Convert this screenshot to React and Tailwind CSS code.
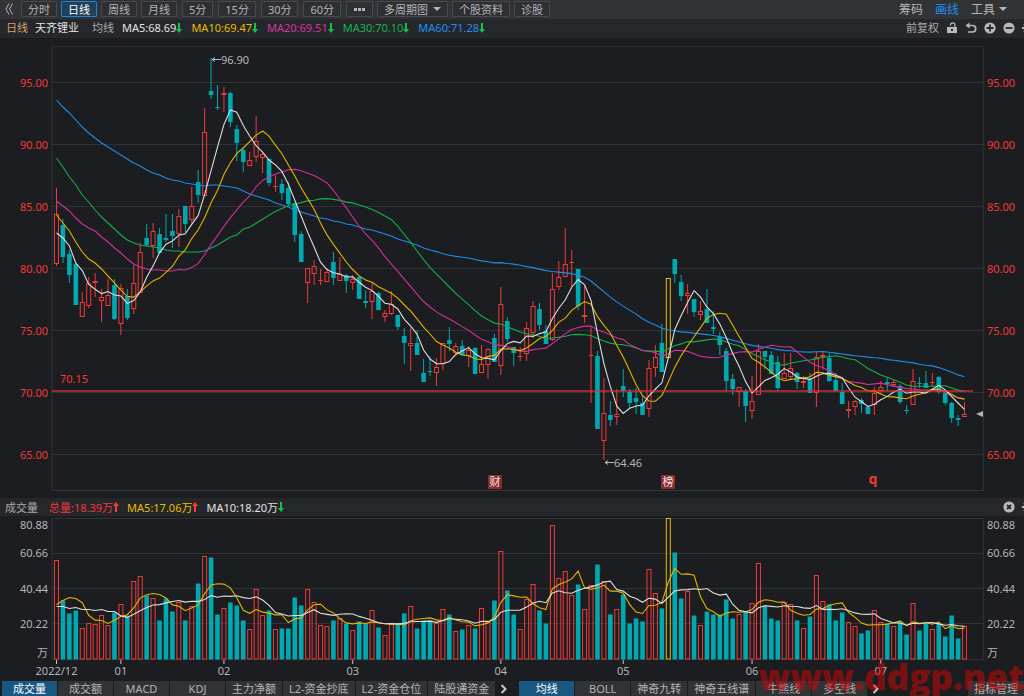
import { useState } from 'react'

// [high, body top, body bottom, low, kind] in chart units, r = up, t = down, y = marked day
const CANDLES = [
  [188,214,264,266,'r'],[219,225,257,263,'t'],[250,254,275,283,'t'],[263,264,305,305,'t'],
  [292,302,317,317,'r'],[277,283,306,308,'r'],[273,281,283,297,'r'],[289,297,301,322,'r'],
  [279,295,306,306,'r'],[279,285,319,320,'t'],[284,288,324,335,'r'],[289,296,318,320,'t'],
  [265,283,309,314,'r'],[243,252,293,293,'r'],[224,238,245,247,'t'],[223,231,246,258,'r'],
  [228,234,253,253,'t'],[214,238,240,242,'t'],[214,231,236,248,'t'],[209,216,234,247,'r'],
  [206,206,224,232,'t'],[187,206,220,223,'r'],[170,182,195,203,'t'],[108,132,196,196,'r'],
  [58,91,95,99,'t'],[85,107,108,110,'t'],[87,93,95,112,'r'],[92,93,122,127,'t'],
  [125,129,143,161,'t'],[147,150,162,172,'t'],[152,160,166,166,'r'],[116,141,157,162,'r'],
  [152,154,158,173,'r'],[158,159,183,186,'t'],[175,186,187,192,'r'],[179,184,193,200,'t'],
  [182,188,204,205,'t'],[203,203,235,242,'t'],[231,234,262,262,'t'],[268,268,283,303,'r'],
  [260,266,274,285,'r'],[269,280,281,285,'r'],[268,272,282,282,'r'],[252,262,278,285,'t'],
  [257,274,281,281,'r'],[274,275,281,293,'t'],[275,279,283,290,'r'],[276,277,299,299,'t'],
  [290,301,303,308,'t'],[283,291,302,319,'r'],[292,293,310,310,'t'],[310,313,317,322,'r'],
  [291,304,314,315,'r'],[315,315,327,330,'t'],[328,336,343,364,'t'],[327,343,346,371,'r'],
  [330,343,355,355,'t'],[359,373,382,382,'t'],[356,371,372,376,'t'],[358,367,373,386,'r'],
  [343,343,364,370,'r'],[327,340,344,351,'t'],[343,346,353,355,'r'],[340,346,355,356,'t'],
  [346,350,356,367,'r'],[347,348,374,374,'t'],[345,364,373,373,'r'],[348,349,365,379,'r'],
  [334,338,362,362,'t'],[287,304,366,375,'r'],[317,321,339,342,'t'],[347,347,353,366,'t'],
  [347,356,357,361,'r'],[322,328,354,361,'r'],[301,306,333,338,'r'],[303,309,325,330,'t'],
  [325,331,344,344,'t'],[273,289,340,341,'r'],[261,277,287,290,'r'],[228,264,277,277,'r'],
  [250,262,263,286,'r'],[269,269,306,310,'t'],[286,315,317,323,'r'],[326,355,356,403,'r'],
  [351,356,429,429,'t'],[378,413,441,460,'r'],[401,415,420,426,'t'],[389,414,417,425,'r'],
  [369,386,391,397,'t'],[389,392,403,408,'t'],[388,398,402,414,'t'],[395,403,415,415,'t'],
  [360,368,409,417,'r'],[345,357,368,377,'r'],[324,343,372,372,'t'],[278,278,358,358,'y'],
  [259,259,274,283,'t'],[275,282,296,301,'t'],[284,293,296,314,'r'],[299,299,312,317,'t'],
  [301,311,315,320,'r'],[289,309,323,323,'t'],[311,327,329,334,'t'],[332,337,345,355,'t'],
  [348,351,381,391,'t'],[374,379,389,395,'t'],[387,387,392,407,'r'],[389,391,406,422,'t'],
  [376,401,411,419,'r'],[344,351,395,395,'r'],[351,351,357,369,'t'],[351,355,374,374,'t'],
  [356,362,388,391,'t'],[353,373,379,379,'r'],[353,368,377,379,'r'],[372,373,382,389,'t'],
  [376,381,383,388,'r'],[373,379,393,393,'t'],[352,357,393,407,'r'],[351,355,357,370,'r'],
  [353,358,381,382,'t'],[373,380,391,391,'t'],[383,392,404,404,'t'],[401,409,411,418,'r'],
  [400,401,407,415,'r'],[398,400,404,413,'t'],[405,407,414,414,'t'],[387,393,405,415,'r'],
  [381,387,391,393,'r'],[377,382,384,391,'t'],[380,382,385,387,'r'],[384,386,402,404,'t'],
  [405,410,411,414,'t'],[369,381,405,405,'r'],[377,383,384,388,'t'],[371,383,388,388,'t'],
  [373,382,383,386,'r'],[376,377,392,394,'t'],[393,393,403,405,'t'],[402,403,418,423,'t'],
  [415,418,420,426,'t'],[402,414,417,417,'r'],
]

const VOLUMES = [
  99,59,46,49,31,36,35,44,34,47,55,44,78,83,64,61,39,61,48,57,39,53,76,103,102,45,51,57,54,39,
  30,70,44,49,30,31,31,62,54,70,57,34,33,39,41,36,29,38,36,49,32,24,35,36,46,53,31,39,39,36,
  50,45,28,30,34,31,51,37,59,108,69,45,30,60,75,49,36,134,81,88,64,75,50,74,95,78,45,50,65,36,
  41,38,90,66,51,141,107,61,68,44,34,48,45,45,60,41,45,48,56,96,54,41,39,57,55,39,31,43,84,58,
  55,39,47,37,33,26,29,49,37,36,33,38,25,56,29,36,30,36,23,44,21,33,
]

// The averages need history from before the first visible day
const SEED5 = [233,238,246,263]
const SEED10 = [215,223,231,242,252,259,263,269,276]
const SEED20 = [201,206,211,218,224,228,231,237,242,248,253,259,264,267,269,270,270,271,271]
const SEED30 = [158,167,177,185,195,202,210,217,223,229,235,240,243,245,246,247,248,250,251,251,252,252,252,251,248,245,241,237,235]
const SEED60 = [
  100,107,113,120,127,133,138,143,147,151,155,159,163,166,170,173,175,178,180,181,183,184,185,186,185,185,186,187,188,191,
  194,196,198,200,203,205,207,210,212,214,216,218,219,221,222,224,225,227,229,230,232,234,236,239,241,243,245,248,250,
]
const VOL_SEED5 = [55,59,62,61]
const VOL_SEED10 = [53,53,51,52,50,50,49,50,48]

const CLOSES = CANDLES.map(([, top, bottom, , kind]) => (kind === 't' ? bottom : top))
const COLORS = { r: '#f03a3a', t: '#00a8b0', y: '#e6bd00' }
const BASE = 659.5

const cx = (i) => 56.5 + i * 6.44

function average(values, n, seed) {
  return values.map((_, i) => {
    if (i < n - 1) return seed[i]
    let sum = 0
    for (let k = i - n + 1; k <= i; k++) sum += values[k]
    return sum / n
  })
}

const toPoints = (ys) => ys.map((y, i) => `${cx(i).toFixed(1)},${y.toFixed(1)}`).join(' ')

const PRICE_LINES = [
  { color: '#1e8ce6', points: toPoints(average(CLOSES, 60, SEED60)) },
  { color: '#14ae4c', points: toPoints(average(CLOSES, 30, SEED30)) },
  { color: '#d0309c', points: toPoints(average(CLOSES, 20, SEED20)) },
  { color: '#e0b400', points: toPoints(average(CLOSES, 10, SEED10)) },
  { color: '#dedede', points: toPoints(average(CLOSES, 5, SEED5)) },
]

const VOLUME_LINES = [
  { color: '#e0b400', points: toPoints(average(VOLUMES, 5, VOL_SEED5).map((v) => BASE - v)) },
  { color: '#dedede', points: toPoints(average(VOLUMES, 10, VOL_SEED10).map((v) => BASE - v)) },
]

const PRICE_TICKS = [
  [82.5, '95.00'], [144.5, '90.00'], [206.5, '85.00'], [268.5, '80.00'],
  [330.5, '75.00'], [392.5, '70.00'], [454.5, '65.00'],
]
const VOLUME_TICKS = [[525, '80.88'], [553, '60.66'], [589, '40.44'], [624, '20.22'], [653, '万']]
const MONTHS = [[0, '2022/12'], [10, '01'], [26, '02'], [46, '03'], [69, '04'], [88, '05'], [108, '06'], [128, '07']]

const DAY_PERIODS = ['分时', '日线', '周线', '月线']
const MINUTE_PERIODS = ['5分', '15分', '30分', '60分']
const LEGEND = [
  ['MA5:68.69', 'text-[#e2e2e2]'],
  ['MA10:69.47', 'text-[#e6bd00]'],
  ['MA20:69.51', 'text-[#d9329f]'],
  ['MA30:70.10', 'text-[#16b24e]'],
  ['MA60:71.28', 'text-[#1e90f0]'],
]
const SUB_TABS = ['成交量', '成交额', 'MACD', 'KDJ', '主力净额', 'L2-资金抄底', 'L2-资金仓位', '陆股通资金']
const MAIN_TABS = ['均线', 'BOLL', '神奇九转', '神奇五线谱', '牛熊线', '多空线']

function Arrow({ up }) {
  return (
    <svg viewBox="0 0 6 12" className={`h-3 w-[6px] shrink-0 ${up ? 'text-[#ff3c3c]' : 'rotate-180 text-[#12c24e]'}`} aria-hidden="true">
      <path d="M3 1 L6 5 H4 V11 H2 V5 H0 Z" fill="currentColor" />
    </svg>
  )
}

function Legend({ text, color, up }) {
  return (
    <span className={`flex items-center ${color}`}>
      {text}
      <Arrow up={up} />
    </span>
  )
}

function Caret() {
  return (
    <svg viewBox="0 0 8 4" className="h-1 w-2" aria-hidden="true">
      <path d="M0 0 H8 L4 4 Z" fill="currentColor" />
    </svg>
  )
}

function GearEdge() {
  return (
    <svg viewBox="0 0 12 12" className="h-3 w-3 shrink-0" aria-hidden="true">
      <circle cx="6" cy="6" r="3" fill="none" stroke="currentColor" strokeWidth="2" />
      <path d="M6 0 V3 M6 9 V12 M0 6 H3 M9 6 H12 M2 2 L4 4 M8 8 L10 10 M2 10 L4 8 M8 4 L10 2" stroke="currentColor" strokeWidth="2" />
    </svg>
  )
}

function ToolButton({ active, children, ...rest }) {
  return (
    <button
      type="button"
      className={`flex h-4 items-center gap-[5px] rounded-[1px] border px-[6px] whitespace-nowrap ${
        active ? 'border-[#1b86d8] bg-[#1f3f5a] text-white' : 'border-[#48494d] bg-[#2e2f33] text-[#b4b5b8]'
      }`}
      {...rest}
    >
      {children}
    </button>
  )
}

function Toolbar() {
  const [period, setPeriod] = useState('日线')
  const periodButton = (p) => (
    <ToolButton key={p} active={p === period} onClick={() => setPeriod(p)}>{p}</ToolButton>
  )
  return (
    <header className="flex h-[19px] items-center justify-between bg-[#323337] pr-[17px] pb-px text-[#b4b5b8]">
      <div className="flex items-center gap-[5px]">
        <div className="flex items-center gap-1">
          <button type="button" aria-label="收起" className="flex w-[17px] justify-center">
            <svg viewBox="0 0 8 12" className="h-3 w-2">
              <path d="M4 0.5 L1 6 L4 11.5 M7.5 0.5 L4.5 6 L7.5 11.5" fill="none" stroke="currentColor" />
            </svg>
          </button>
          {DAY_PERIODS.map(periodButton)}
        </div>
        {MINUTE_PERIODS.map(periodButton)}
        <div className="flex items-center gap-1">
          <ToolButton aria-label="更多">
            <svg viewBox="0 0 13 3" className="h-[3px] w-[13px]">
              <path d="M1 0 H4 V3 H1 Z M5 0 H8 V3 H5 Z M9 0 H12 V3 H9 Z" fill="currentColor" />
            </svg>
          </ToolButton>
          <ToolButton>多周期图<Caret /></ToolButton>
          <ToolButton>个股资料</ToolButton>
          <ToolButton>诊股</ToolButton>
        </div>
      </div>
      <div className="flex items-center gap-3 text-[12px]">
        <button type="button">筹码</button>
        <button type="button" className="text-[#1e90f0]">画线</button>
        <button type="button" className="flex items-center gap-1">工具<Caret /></button>
      </div>
    </header>
  )
}

function PriceHeader() {
  return (
    <div className="flex h-[19px] items-center justify-between overflow-hidden bg-[#26272b] pb-[2px] pl-[6px] text-[#a9aaad]">
      <div className="flex items-center whitespace-nowrap">
        <span className="text-[#d9a066]">日线</span>
        <span className="ml-[7px] text-[#e2e2e2]">天齐锂业</span>
        <span className="mr-2 ml-[13px]">均线</span>
        <div className="flex gap-[9px]">
          {LEGEND.map(([text, color]) => <Legend key={text} text={text} color={color} />)}
        </div>
      </div>
      <div className="-mr-[10px] flex items-center gap-[7px] text-[#b8b9bc]">
        <button type="button" className="text-[#a9aaad]">前复权</button>
        <button type="button" aria-label="锁定">
          <svg viewBox="0 0 12 12" className="h-3 w-3">
            <path d="M4.5 3.6 V3 A2.2 2.2 0 0 1 8.9 3 V5" fill="none" stroke="currentColor" strokeWidth="1.2" />
            <path d="M1 5 H11 V11 H1 Z M5 7 V9 H7 V7 Z" fill="currentColor" fillRule="evenodd" />
          </svg>
        </button>
        <button type="button" aria-label="撤销">
          <svg viewBox="0 0 12 12" className="h-3 w-3">
            <path d="M2 3.5 H7.5 A3.2 3.2 0 0 1 7.5 10 H3" fill="none" stroke="currentColor" strokeWidth="1.6" />
            <path d="M0.5 3.5 L4.5 0.5 V6.5 Z" fill="currentColor" />
          </svg>
        </button>
        <button type="button" aria-label="放大">
          <svg viewBox="0 0 12 12" className="h-3 w-3">
            <circle cx="6" cy="6" r="5.6" fill="currentColor" />
            <path d="M2.5 6 H9.5 M6 2.5 V9.5" stroke="#26272b" strokeWidth="1.8" />
          </svg>
        </button>
        <button type="button" aria-label="缩小">
          <svg viewBox="0 0 12 12" className="h-3 w-3">
            <circle cx="6" cy="6" r="5.6" fill="currentColor" />
            <path d="M2.5 6 H9.5" stroke="#26272b" strokeWidth="1.8" />
          </svg>
        </button>
        <button type="button" aria-label="设置"><GearEdge /></button>
      </div>
    </div>
  )
}

function Candle({ x, candle }) {
  const [high, top, bottom, low, kind] = candle
  const color = COLORS[kind]
  const flat = bottom - top < 2
  if (kind === 't' || flat) {
    return (
      <g>
        <path d={`M${x} ${high} V${low}`} stroke={color} />
        <rect x={x - 2.3} y={top} width="4.6" height={Math.max(bottom - top, 1)} fill={color} />
      </g>
    )
  }
  return (
    <g fill="none" stroke={color}>
      <path d={`M${x} ${high} V${top} M${x} ${bottom} V${low}`} />
      <rect x={x - 2} y={top + 0.5} width="4" height={bottom - top - 1} />
    </g>
  )
}

function Flag({ x, label }) {
  return (
    <g>
      <rect x={x} y="475" width="14" height="14" rx="1" fill="#8c2c2f" />
      <text x={x + 7} y="486" textAnchor="middle" fill="#f0e4e4">{label}</text>
    </g>
  )
}

function PriceChart() {
  return (
    <svg viewBox="0 38 1024 460" className="block w-full text-[11px]" role="img" aria-label="天齐锂业 日线">
      <path d="M52 46.5 H984" stroke="#2c2d31" />
      <path d="M52 46 V490 M983.5 46 V490" stroke="#2c2d31" strokeWidth="1.4" />
      <path d="M52 490.5 H984" stroke="#343539" />
      {PRICE_TICKS.map(([y, label]) => (
        <g key={label} fill="#f03a3a">
          <path d={`M52 ${y} H983`} stroke="#303135" />
          <text x="48" y={y + 4.5} textAnchor="end">{label}</text>
          <text x="987" y={y + 4.5}>{label}</text>
        </g>
      ))}
      {CANDLES.map((c, i) => <Candle key={i} x={cx(i)} candle={c} />)}
      {PRICE_LINES.map((l) => (
        <polyline key={l.color} points={l.points} fill="none" stroke={l.color} strokeWidth="1.1" />
      ))}
      <path d="M52 391 H973" stroke="#d83338" strokeOpacity="0.65" strokeWidth="2" />
      <text x="60" y="383" fill="#f03a3a">70.15</text>
      <g fill="#b4b5b8">
        <path d="M212 59.5 H221 M215 57.5 L212 59.5 L215 61.5" fill="none" stroke="#b4b5b8" />
        <text x="221" y="64">96.90</text>
        <path d="M605 462.5 H614 M608 460.5 L605 462.5 L608 464.5" fill="none" stroke="#b4b5b8" />
        <text x="614" y="467">64.46</text>
        <path d="M976 414 L983 411 V417 Z" />
      </g>
      <Flag x={488} label="财" />
      <Flag x={661} label="榜" />
      <text x="873" y="484" textAnchor="middle" fill="#f03a3a" className="text-[14px] font-bold">q</text>
    </svg>
  )
}

function VolumeHeader() {
  return (
    <div className="flex h-[18px] items-center justify-between overflow-hidden bg-[#26272b] pl-[5px] text-[#a9aaad]">
      <div className="flex items-center gap-2 whitespace-nowrap">
        <span className="mr-[3px]">成交量</span>
        <Legend text="总量:18.39万" color="text-[#f03a3a]" up />
        <Legend text="MA5:17.06万" color="text-[#e6bd00]" up />
        <Legend text="MA10:18.20万" color="text-[#e2e2e2]" />
      </div>
      <div className="-mr-[10px] flex items-center gap-[7px] text-[#b8b9bc]">
        <button type="button" aria-label="关闭">
          <svg viewBox="0 0 12 12" className="h-3 w-3">
            <circle cx="6" cy="6" r="5.6" fill="currentColor" />
            <path d="M4 4 L8 8 M8 4 L4 8" stroke="#26272b" strokeWidth="1.8" />
          </svg>
        </button>
        <button type="button" aria-label="设置"><GearEdge /></button>
      </div>
    </div>
  )
}

function VolumeChart() {
  return (
    <svg viewBox="0 516 1024 165" className="block w-full text-[11px]" role="img" aria-label="成交量">
      <path d="M52 518.5 H984 M52 553.5 H984 M52 588.5 H984 M52 623.5 H984 M52 659.5 H984" stroke="#303135" />
      <path d="M52 518 V660 M983.5 518 V660" stroke="#2c2d31" strokeWidth="1.4" />
      {VOLUME_TICKS.map(([y, label]) => (
        <g key={label} fill="#b4b5b8">
          <text x="48" y={y + 4} textAnchor="end">{label}</text>
          <text x="987" y={y + 4}>{label}</text>
        </g>
      ))}
      {VOLUMES.map((v, i) => {
        const kind = CANDLES[i][4]
        return kind === 't' ? (
          <rect key={i} x={cx(i) - 2.3} y={BASE - v} width="4.6" height={v} fill={COLORS.t} />
        ) : (
          <rect key={i} x={cx(i) - 2} y={BASE - v} width="4" height={v - 0.5} fill="none" stroke={COLORS[kind]} />
        )
      })}
      {VOLUME_LINES.map((l) => (
        <polyline key={l.color} points={l.points} fill="none" stroke={l.color} strokeWidth="1.1" />
      ))}
      {MONTHS.map(([i, label]) => (
        <g key={label} fill="#b4b5b8">
          <path d={`M${cx(i)} 660 V664`} stroke="#c8c9cc" />
          <text x={cx(i)} y="675" textAnchor="middle">{label}</text>
        </g>
      ))}
    </svg>
  )
}

function Tabs({ items, label }) {
  const [current, setCurrent] = useState(items[0])
  return (
    <div className="flex gap-px" role="tablist" aria-label={label}>
      {items.map((item) => (
        <button
          key={item}
          type="button"
          role="tab"
          aria-selected={item === current}
          onClick={() => setCurrent(item)}
          className={`h-[15px] min-w-[55px] px-[6px] leading-[15px] whitespace-nowrap ${
            item === current ? 'bg-[#195682] text-white' : 'bg-[#323337] text-[#b4b5b8]'
          }`}
        >
          {item}
        </button>
      ))}
    </div>
  )
}

function More() {
  return (
    <button type="button" aria-label="更多指标" className="flex w-[18px] justify-center text-[#c8c9cc]">
      <svg viewBox="0 0 8 10" className="h-[10px] w-2">
        <path d="M1.5 1 L5.5 5 L1.5 9" fill="none" stroke="currentColor" strokeWidth="2" />
      </svg>
    </button>
  )
}

export default function App() {
  return (
    <main className="relative overflow-hidden bg-[#1c1d20] font-['Noto_Sans','Noto_Sans_CJK_SC',sans-serif] text-[11px] leading-[15px]">
      <Toolbar />
      <PriceHeader />
      <PriceChart />
      <VolumeHeader />
      <VolumeChart />
      <footer className="flex items-center justify-between overflow-hidden pl-[2px]">
        <div className="flex items-center">
          <Tabs items={SUB_TABS} label="副图指标" />
          <More />
          <div className="ml-[6px] flex items-center">
            <Tabs items={MAIN_TABS} label="主图指标" />
            <More />
          </div>
        </div>
        <button type="button" className="h-[15px] bg-[#323337] px-[6px] leading-[15px] whitespace-nowrap text-[#b4b5b8]">指标管理</button>
      </footer>
      <div className="pointer-events-none absolute right-0 bottom-[2px] font-['Open_Sans',sans-serif] text-[35px] leading-[35px] font-black text-[#cc0808]/55">
        www.ddgp.net
      </div>
    </main>
  )
}
